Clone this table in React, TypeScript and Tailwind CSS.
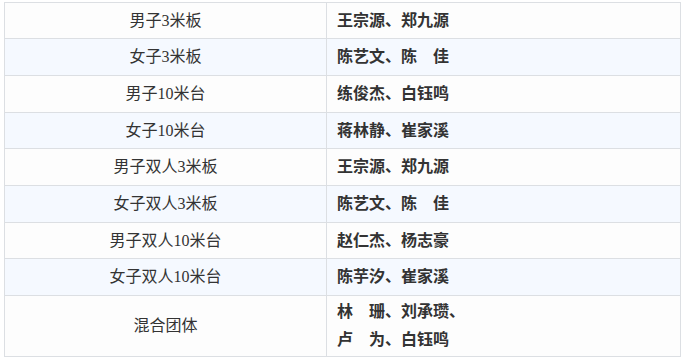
import React from 'react';

interface Row {
  event: string;
  names: string[];
  h: string;
}

const rows: Row[] = [
  { event: '男子3米板', names: ['王宗源、郑九源'], h: 'h-[36px]' },
  { event: '女子3米板', names: ['陈艺文、陈　佳'], h: 'h-[37px]' },
  { event: '男子10米台', names: ['练俊杰、白钰鸣'], h: 'h-[37px]' },
  { event: '女子10米台', names: ['蒋林静、崔家溪'], h: 'h-[36px]' },
  { event: '男子双人3米板', names: ['王宗源、郑九源'], h: 'h-[37px]' },
  { event: '女子双人3米板', names: ['陈艺文、陈　佳'], h: 'h-[37px]' },
  { event: '男子双人10米台', names: ['赵仁杰、杨志豪'], h: 'h-[36px]' },
  { event: '女子双人10米台', names: ['陈芋汐、崔家溪'], h: 'h-[37px]' },
  { event: '混合团体', names: ['林　珊、刘承瓒、', '卢　为、白钰鸣'], h: 'h-[61px]' },
];

const App: React.FC = () => {
  return (
    <div
      className="min-h-screen bg-white pl-1 pt-0.5"
      style={{ fontFamily: '"Liberation Serif", "Noto Sans CJK SC", serif' }}
    >
      <table className="w-[677px] border-collapse text-[16px] text-[#333333]">
        <tbody>
          {rows.map((row, i) => (
            <tr key={i} className={i % 2 === 1 ? 'bg-[#f5f9ff]' : 'bg-[#fdfdfd]'}>
              <td
                className={`w-[322px] border border-[#dcdfe3] p-0 text-center align-middle leading-[28px] ${row.h}`}
              >
                {row.event}
              </td>
              <td className="border border-[#dcdfe3] py-0 pl-[10px] pr-2 align-middle font-bold leading-[28px]">
                {row.names.map((n, j) => (
                  <div key={j}>{n}</div>
                ))}
              </td>
            </tr>
          ))}
        </tbody>
      </table>
    </div>
  );
};

export default App;
